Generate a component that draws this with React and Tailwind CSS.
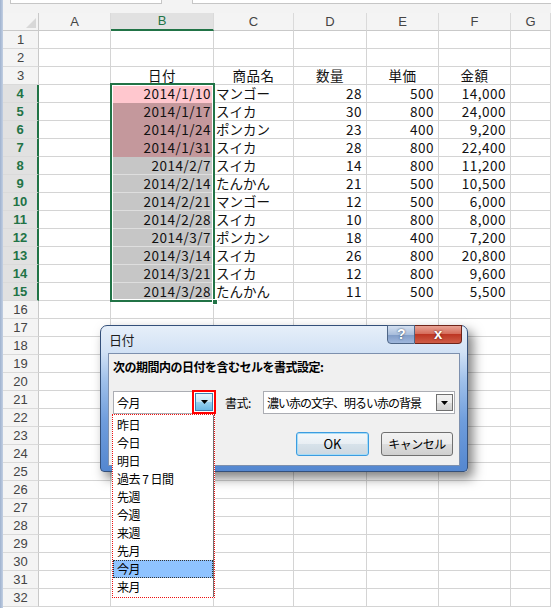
import React from 'react';

// Sheet data, rows 4-15
const DATA = {
    4: ['2014/1/10', 'マンゴー', '28', '500', '14,000', 'active'],
    5: ['2014/1/17', 'スイカ', '30', '800', '24,000', 'pink'],
    6: ['2014/1/24', 'ポンカン', '23', '400', '9,200', 'pink'],
    7: ['2014/1/31', 'スイカ', '28', '800', '22,400', 'pink'],
    8: ['2014/2/7', 'スイカ', '14', '800', '11,200', 'gray'],
    9: ['2014/2/14', 'たんかん', '21', '500', '10,500', 'gray'],
    10: ['2014/2/21', 'マンゴー', '12', '500', '6,000', 'gray'],
    11: ['2014/2/28', 'スイカ', '10', '800', '8,000', 'gray'],
    12: ['2014/3/7', 'ポンカン', '18', '400', '7,200', 'gray'],
    13: ['2014/3/14', 'スイカ', '26', '800', '20,800', 'gray'],
    14: ['2014/3/21', 'スイカ', '12', '800', '9,600', 'gray'],
    15: ['2014/3/28', 'たんかん', '11', '500', '5,500', 'gray'],
};

const B_TONES = {
    active: 'bg-[#ffc7ce] text-[#9c0006] border-b-[#ffc7ce]',
    pink: 'bg-[#c4989c] text-[#8c0005] border-b-[#c4989c]',
    gray: 'bg-[#c6c6c6] text-[#111] border-b-[#dedede]',
};

const LIST = ['昨日', '今日', '明日', '過去 7 日間', '先週', '今週', '来週', '先月', '今月', '来月'];

const ROWS = Array.from({ length: 32 }, (_, i) => i + 1);

const cell = 'h-[18px] border-r border-b border-[#d4d4d4] leading-[17px] text-[13.5px] tracking-[0.5px] whitespace-nowrap text-[#111]';

function Arrow() {
    return (
        <svg width="7" height="4" viewBox="0 0 7 4">
            <path d="M0 0h7L3.5 4z" fill="#000" />
        </svg>
    );
}

function Sheet() {
    return (
        <div className="grid grid-cols-[36px_72px_103px_80px_73px_72px_72px_40px] font-['Noto_Sans_CJK_JP',sans-serif]">
            {/* column headers */}
            <div className="relative h-[18px] bg-[#f4f4f4] border-r border-b border-[#c9c9c9]">
                <div className="absolute right-[2px] bottom-[2px] w-[10px] h-[10px] bg-[#d8d8d8] [clip-path:polygon(100%_0,100%_100%,0_100%)]" />
            </div>
            {['A', 'B', 'C', 'D', 'E', 'F', 'G'].map((c) => (
                <div
                    key={c}
                    className={`h-[18px] flex items-center justify-center font-['Liberation_Sans',sans-serif] text-[13px] border-r border-[#dadada] ${
                        c === 'B' ? 'bg-[#e1e1e1] border-b-2 border-b-[#217346] text-[#217346]' : 'bg-[#f4f4f4] border-b border-b-[#c9c9c9] text-[#444]'
                    }`}
                >
                    {c}
                </div>
            ))}

            {ROWS.map((r) => {
                const d = DATA[r];
                const sel = r >= 4 && r <= 15;
                return (
                    <React.Fragment key={r}>
                        <div
                            className={`h-[18px] flex items-center justify-center font-['Liberation_Sans',sans-serif] text-[13px] border-b border-[#dadada] ${
                                sel
                                    ? 'bg-[#e1e1e1] text-[#217346] font-bold border-r-2 border-r-[#217346]'
                                    : 'bg-[#f4f4f4] text-[#444] border-r border-r-[#c9c9c9]'
                            }`}
                        >
                            {r}
                        </div>
                        <div className={cell} />
                        {r === 3 ? (
                            <>
                                <div className={`${cell} text-center`}>日付</div>
                                <div className={`${cell} text-center`}>商品名</div>
                                <div className={`${cell} text-center`}>数量</div>
                                <div className={`${cell} text-center`}>単価</div>
                                <div className={`${cell} text-center`}>金額</div>
                            </>
                        ) : d ? (
                            <>
                                <div className={`${cell} text-right pr-[2px] ${B_TONES[d[5]]}`}>{d[0]}</div>
                                <div className={`${cell} pl-[2px] tracking-normal`}>{d[1]}</div>
                                <div className={`${cell} text-right pr-[4px]`}>{d[2]}</div>
                                <div className={`${cell} text-right pr-[4px]`}>{d[3]}</div>
                                <div className={`${cell} text-right pr-[4px]`}>{d[4]}</div>
                            </>
                        ) : (
                            <>
                                <div className={cell} />
                                <div className={cell} />
                                <div className={cell} />
                                <div className={cell} />
                                <div className={cell} />
                            </>
                        )}
                        <div className={cell} />
                    </React.Fragment>
                );
            })}
        </div>
    );
}

function Dialog() {
    return (
        <div className="absolute left-[100px] top-[325px] w-[368px] h-[147px] flex flex-col rounded-t-[7px] rounded-b-[4px] border border-[#34507a] bg-[linear-gradient(to_bottom,#e6eff9_0px,#d2e2f5_26px,#9fc0ea_55px,#6f9ddc_95px,#5487d0_100%)] shadow-[5px_6px_12px_rgba(0,0,0,0.5)] px-[7px] pb-[5px] font-['Noto_Sans_CJK_JP',sans-serif] text-[12px] tracking-[-0.5px]">
            {/* title bar */}
            <div className="h-[27px] flex items-center text-[13px] text-[#1e1e1e] pl-[1px]">日付</div>
            <div className="absolute top-[-1px] right-[5px] flex">
                <div className="w-[28px] h-[19px] flex items-center justify-center rounded-bl-[4px] border border-[#4e6687] bg-[linear-gradient(to_bottom,#d4e0f0,#a9bedc_50%,#7f9bc6_51%,#9fb7dc)] text-white font-bold text-[14px] font-['Liberation_Sans',sans-serif] [text-shadow:0_0_2px_#2a3d58]">
                    ?
                </div>
                <div className="w-[47px] h-[19px] flex items-center justify-center rounded-br-[4px] border border-l-0 border-[#6e2419] bg-[linear-gradient(to_bottom,#e8a395,#d66e5c_45%,#bd3623_50%,#cf5d47)] text-white font-bold text-[15px] font-['Liberation_Sans',sans-serif] [text-shadow:0_0_2px_#4a1008]">
                    x
                </div>
            </div>

            {/* client area */}
            <div className="flex-1 bg-[#f0f0f0] border border-[#7d90ae] flex flex-col">
                <div className="mt-[5px] ml-[4px] h-[16px] leading-[16px] font-bold text-black">
                    次の期間内の日付を含むセルを書式設定:
                </div>
                <div className="mt-[16px] ml-[4px] flex items-center h-[23px]">
                    <div className="relative w-[102px] h-[23px] bg-white border border-[#abadb3] flex items-center pl-[3px]">
                        今月
                        <div className="absolute right-[-2px] top-[-2px] w-[24px] h-[24px] border-2 border-[#ff0000] p-[1px]">
                            <div className="w-full h-full flex items-center justify-center border border-[#3c7fb1] bg-[linear-gradient(to_bottom,#e5f4fc,#c4e5f6_50%,#98d1ef_51%,#6cb8e4)]">
                                <Arrow />
                            </div>
                        </div>
                    </div>
                    <div className="ml-[10px] w-[38px]">書式:</div>
                    <div className="relative w-[192px] h-[23px] bg-white border border-[#abadb3] flex items-center pl-[3px] whitespace-nowrap tracking-[-1px]">
                        濃い赤の文字、明るい赤の背景
                        <div className="absolute right-[1px] top-[2px] w-[17px] h-[17px] flex items-center justify-center border border-[#707070] bg-[linear-gradient(to_bottom,#f2f2f2,#ebebeb_50%,#dddddd_51%,#cfcfcf)]">
                            <Arrow />
                        </div>
                    </div>
                </div>
                <div className="mt-[18px] flex justify-end gap-[12px] pr-[6px]">
                    <div className="w-[73px] h-[24px] flex items-center justify-center rounded-[3px] border border-[#3c9ce0] bg-[linear-gradient(to_bottom,#f4f8fb,#e8eef3_50%,#d7e2ea_51%,#cdd8e1)] shadow-[inset_0_0_0_1px_#a7dcf6] text-[13px] tracking-normal">
                        OK
                    </div>
                    <div className="w-[72px] h-[24px] flex items-center justify-center rounded-[3px] border border-[#707070] bg-[linear-gradient(to_bottom,#f2f2f2,#ebebeb_50%,#dddddd_51%,#cfcfcf)]">
                        キャンセル
                    </div>
                </div>
            </div>
        </div>
    );
}

function DropList() {
    return (
        <div className="absolute left-[112px] top-[414px] w-[103px] h-[184px] border border-dotted border-[#ee1111] bg-white font-['Noto_Sans_CJK_JP',sans-serif] text-[12px] tracking-[-0.5px]">
            <div className="h-full border-r border-[#707070] pt-[1px]">
                {LIST.map((t) => (
                    <div
                        key={t}
                        className={`h-[18px] leading-[16px] pl-[3px] border ${
                            t === '今月' ? 'bg-[#8fc3ff] border-dotted border-[#333]' : 'border-transparent'
                        }`}
                    >
                        {t}
                    </div>
                ))}
            </div>
        </div>
    );
}

export default function App() {
    return (
        <div className="relative w-[551px] h-[608px] overflow-hidden bg-white flex">
            <div className="w-[3px] shrink-0 bg-[linear-gradient(to_right,#9fb2cf,#c3d0e3)]" />
            <div className="flex-1 flex flex-col">
                {/* formula bar remnant */}
                <div className="h-[13px] bg-[#f3f3f3] relative">
                    <div className="absolute left-[7px] top-0 w-[152px] h-[4px] bg-white border-x border-b border-[#c6c6c6]" />
                    <div className="absolute left-[189px] top-0 w-[400px] h-[4px] bg-white border-l border-b border-[#c6c6c6]" />
                </div>
                <Sheet />
            </div>

            {/* selection B4:B15 */}
            <div className="absolute left-[110px] top-[83px] w-[105px] h-[219px] border-2 border-[#217346] shadow-[inset_0_0_0_1px_#ffffff]" />
            <div className="absolute left-[212px] top-[299px] w-[6px] h-[6px] bg-[#217346] border border-white" />

            <Dialog />
            <DropList />
        </div>
    );
}
